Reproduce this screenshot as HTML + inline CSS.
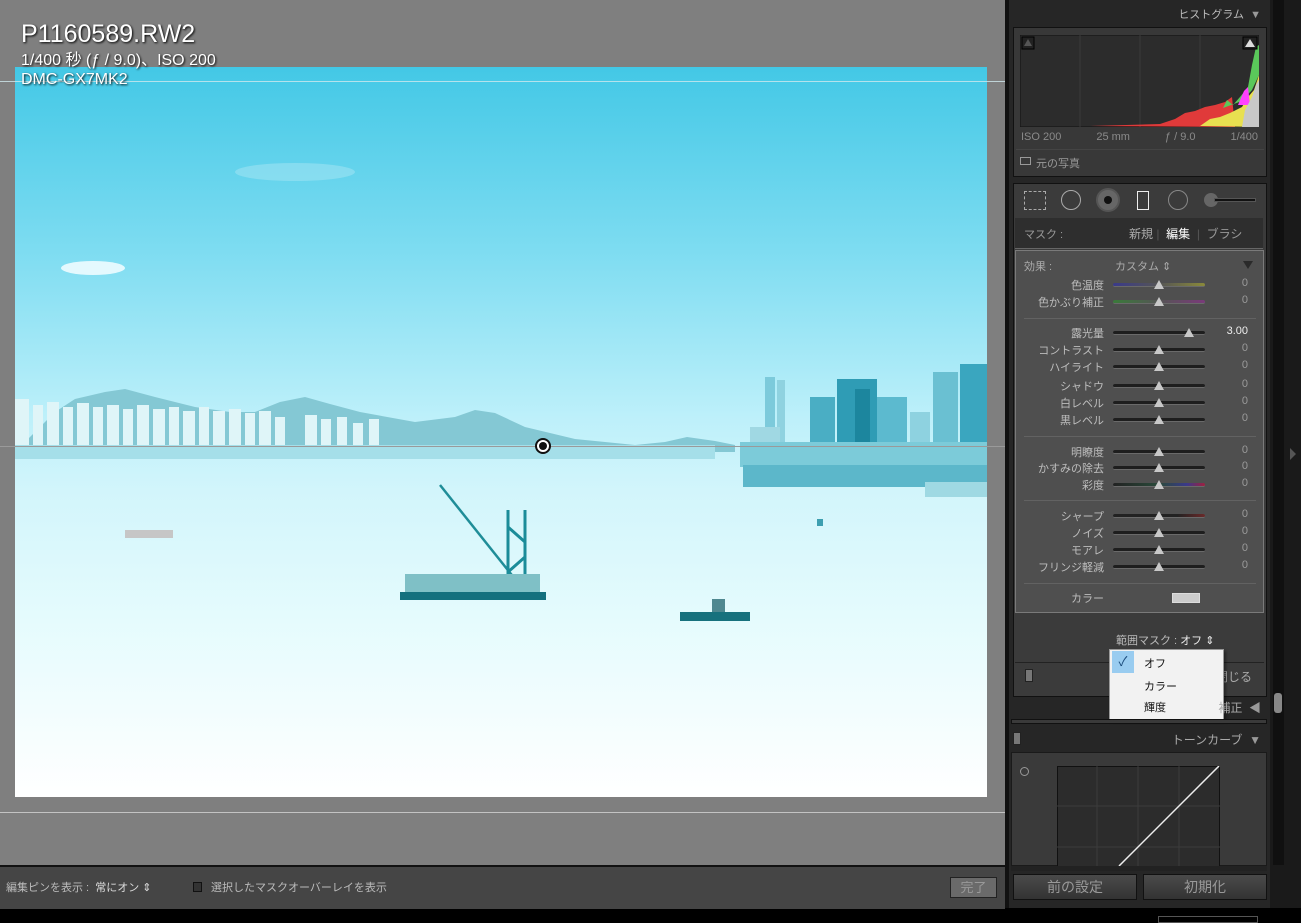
<!DOCTYPE html>
<html><head><meta charset="utf-8"><style>
*{margin:0;padding:0;box-sizing:border-box}
body{width:1301px;height:923px;overflow:hidden;background:#000;font-family:"Liberation Sans","Noto Sans CJK JP",sans-serif;position:relative}
.a{position:absolute}
.lbl{position:absolute;right:197px;font-size:11px;color:#bdbdbd;text-align:right;white-space:nowrap}
.trk{position:absolute;left:1113px;width:92px;height:4px;border-radius:2px;background:#1e1e1e;border-bottom:1px solid #6a6a6a}
.knob{position:absolute;width:0;height:0;border-left:5px solid transparent;border-right:5px solid transparent;border-bottom:9px solid #c8c8c8}
.val{position:absolute;left:1230px;width:18px;text-align:right;font-size:11px;color:#9a9a9a}
.sep{position:absolute;left:1024px;width:232px;height:1px;background:#626262}
.hdr{position:absolute;right:40px;font-size:12px;color:#aaa;white-space:nowrap}
</style></head><body>
<div class="a" style="left:0;top:0;width:1005px;height:865px;background:#7f7f7f"></div>
<svg class="a" style="left:15px;top:67px" width="972" height="730" viewBox="0 0 972 730">
<defs>
<linearGradient id="sky" x1="0" y1="0" x2="0" y2="1">
<stop offset="0" stop-color="#43c8e6"/><stop offset="0.25" stop-color="#7ddcf1"/><stop offset="0.48" stop-color="#bdf0fa"/><stop offset="0.58" stop-color="#d2f5fb"/><stop offset="0.75" stop-color="#e4fbfd"/><stop offset="1" stop-color="#ffffff"/>
</linearGradient>
</defs>
<rect width="972" height="730" fill="url(#sky)"/>
<ellipse cx="78" cy="201" rx="32" ry="7" fill="#eefcff" opacity=".9"/>
<ellipse cx="280" cy="105" rx="60" ry="9" fill="#a8e6f4" opacity=".5"/>
<path d="M40 345 L60 332 L90 325 L110 322 L140 330 L180 340 L215 345 L240 345 L265 335 L290 330 L315 337 L345 345 L400 355 L440 350 L460 343 L480 346 L510 360 L560 372 L620 378 L650 375 L672 370 L700 374 L720 378 L720 385 L0 385 Z" fill="#84c8d4"/>
<g fill="#dff5f8">
<rect x="0" y="332" width="14" height="50"/><rect x="18" y="338" width="10" height="45"/><rect x="32" y="335" width="12" height="48"/><rect x="48" y="340" width="10" height="42"/><rect x="62" y="336" width="12" height="46"/><rect x="78" y="340" width="10" height="42"/><rect x="92" y="338" width="12" height="44"/><rect x="108" y="342" width="10" height="40"/><rect x="122" y="338" width="12" height="44"/><rect x="138" y="342" width="12" height="40"/><rect x="154" y="340" width="10" height="42"/><rect x="168" y="344" width="12" height="38"/><rect x="184" y="340" width="10" height="42"/><rect x="198" y="344" width="12" height="38"/><rect x="214" y="342" width="12" height="40"/><rect x="230" y="346" width="10" height="36"/><rect x="244" y="344" width="12" height="38"/><rect x="260" y="350" width="10" height="32"/>
<rect x="290" y="348" width="12" height="34"/><rect x="306" y="352" width="10" height="30"/><rect x="322" y="350" width="10" height="32"/><rect x="338" y="356" width="10" height="26"/><rect x="354" y="352" width="10" height="30"/>
</g>
<rect x="0" y="378" width="700" height="14" fill="#a5dfe9"/>
<rect x="750" y="310" width="10" height="80" fill="#7ccadb"/><rect x="762" y="313" width="8" height="77" fill="#8fd2e0"/>
<rect x="735" y="360" width="30" height="30" fill="#a0d8e3"/>
<rect x="795" y="330" width="25" height="70" fill="#4aaec4"/>
<rect x="822" y="312" width="40" height="90" fill="#2f9cb5"/>
<rect x="840" y="322" width="15" height="78" fill="#1c869e"/>
<rect x="862" y="330" width="30" height="70" fill="#5cbacf"/>
<rect x="895" y="345" width="20" height="50" fill="#8ed2e0"/>
<rect x="918" y="305" width="25" height="90" fill="#6ac0d2"/>
<rect x="945" y="297" width="27" height="100" fill="#3aa6bf"/>
<rect x="725" y="375" width="247" height="25" fill="#7ccbd9"/>
<rect x="728" y="398" width="244" height="22" fill="#5cb7ca"/>
<rect x="910" y="415" width="62" height="15" fill="#9fd9e3"/>
<path d="M425 418 L500 512" stroke="#1f8d98" stroke-width="2.5"/>
<path d="M493 443 L493 533 M510 443 L510 533 M493 460 L510 475 M510 490 L493 505" stroke="#1b8c99" stroke-width="3" fill="none"/>
<rect x="390" y="507" width="135" height="22" fill="#7fc0c6"/>
<rect x="385" y="525" width="146" height="8" fill="#13707e"/>
<rect x="665" y="545" width="70" height="9" fill="#17717d"/>
<rect x="697" y="532" width="13" height="13" fill="#4f8890"/>
<rect x="110" y="463" width="48" height="8" fill="#c6c6c6"/>
<rect x="802" y="452" width="6" height="7" fill="#3d9fb0"/>
</svg>
<div class="a" style="left:0;top:81px;width:1005px;height:1px;background:#cfe8ee;opacity:.8"></div>
<div class="a" style="left:0;top:446px;width:1005px;height:1px;background:#9a9a9a"></div>
<div class="a" style="left:0;top:812px;width:1005px;height:1px;background:#e0e0e0;opacity:.7"></div>
<div class="a" style="left:535px;top:438px;width:16px;height:16px;border-radius:50%;background:#fff;border:2px solid #111"><div style="margin:2px;width:8px;height:8px;border-radius:50%;background:#111"></div></div>
<div class="a" style="left:21px;top:20px;color:#fff;font-size:25px;text-shadow:1px 1px 2px #000;line-height:28px">P1160589.RW2</div>
<div class="a" style="left:21px;top:51px;color:#fff;font-size:16px;text-shadow:1px 1px 2px #000;line-height:19px">1/400 秒 (ƒ / 9.0)、ISO 200<br>DMC-GX7MK2</div>
<div class="a" style="left:0;top:865px;width:1005px;height:44px;background:#454545;border-top:2px solid #111"></div>
<div class="a" style="left:6px;top:879px;font-size:11px;color:#bbb">編集ピンを表示 :&nbsp; <span style="color:#ddd">常にオン ⇕</span></div>
<div class="a" style="left:193px;top:882px;width:9px;height:10px;border:1px solid #111;background:#333"></div>
<div class="a" style="left:211px;top:879px;font-size:11px;color:#bbb">選択したマスクオーバーレイを表示</div>
<div class="a" style="left:950px;top:877px;width:47px;height:21px;background:#6a6a6a;border:1px solid #222;color:#999;font-size:13px;text-align:center;line-height:19px">完了</div>
<div class="a" style="left:0;top:910px;width:1005px;height:13px;background:#000"></div>
<div class="a" style="left:1005px;top:0;width:296px;height:923px;background:#262626"></div>
<div class="a" style="left:1005px;top:0;width:4px;height:923px;background:#111"></div>
<div class="a" style="left:1270px;top:0;width:31px;height:923px;background:#1a1a1a"></div>
<div class="a" style="left:1273px;top:0;width:11px;height:865px;background:#101010"></div>
<div class="a" style="left:1274px;top:693px;width:8px;height:20px;background:#888;border-radius:3px"></div>
<div class="a" style="left:1290px;top:448px;width:0;height:0;border-top:6px solid transparent;border-bottom:6px solid transparent;border-left:6px solid #555"></div>
<div class="hdr" style="top:6px;font-size:11px;color:#bbb">ヒストグラム &nbsp;<span style="color:#999">▼</span></div>
<div class="a" style="left:1013px;top:27px;width:254px;height:150px;background:#383838;border:1px solid #111"></div>
<svg class="a" style="left:1020px;top:35px" width="239" height="92">
<rect width="239" height="92" fill="#2c2c2c" stroke="#111"/>
<line x1="60" y1="0" x2="60" y2="92" stroke="#3a3a3a"/><line x1="120" y1="0" x2="120" y2="92" stroke="#3a3a3a"/><line x1="180" y1="0" x2="180" y2="92" stroke="#3a3a3a"/>
<path d="M70 91 L140 89 L155 84 L165 78 L175 76 L185 72 L195 70 L205 67 L212 62 L215 92 Z" fill="#e03a3a"/>
<path d="M180 91 L190 84 L200 82 L210 78 L222 72 L228 62 L234 55 L239 40 L239 92 Z" fill="#e8e050"/>
<path d="M203 73 L207 65 L213 70 L220 62 L228 52 L232 30 L236 12 L239 10 L239 40 L232 55 L222 66 Z" fill="#5ac85a"/>
<path d="M218 70 L224 56 L228 52 L230 70 Z" fill="#ff40ff"/>
<path d="M222 92 L225 75 L232 62 L236 50 L239 45 L239 92 Z" fill="#c8c8c8"/>
<rect x="2" y="2" width="12" height="12" fill="#222" stroke="#000"/><path d="M4 11 L8 4 L12 11Z" fill="#555"/>
<rect x="223" y="2" width="14" height="12" fill="#222" stroke="#000"/><path d="M225 12 L230 4 L235 12Z" fill="#ddd"/>
</svg>
<div class="a" style="left:1021px;top:131px;width:237px;font-size:11px;color:#8a8a8a;display:flex;justify-content:space-between"><span>ISO 200</span><span>25 mm</span><span>ƒ / 9.0</span><span>1/400</span></div>
<div class="a" style="left:1016px;top:149px;width:248px;height:1px;background:#444"></div>
<div class="a" style="left:1020px;top:157px;width:11px;height:8px;border:1px solid #999"></div>
<div class="a" style="left:1036px;top:155px;font-size:11px;color:#999">元の写真</div>
<div class="a" style="left:1013px;top:183px;width:254px;height:514px;background:#3b3b3b;border:1px solid #111"></div>
<div class="a" style="left:1024px;top:191px;width:22px;height:19px;border:1px dashed #aaa"></div>
<div class="a" style="left:1061px;top:190px;width:20px;height:20px;border-radius:50%;border:1px solid #aaa"></div>
<div class="a" style="left:1096px;top:188px;width:24px;height:24px;border-radius:50%;background:#666;border:2px solid #555"><div style="margin:6px;width:8px;height:8px;border-radius:50%;background:#111"></div></div>
<div class="a" style="left:1137px;top:191px;width:12px;height:19px;border:1px solid #eee"></div>
<div class="a" style="left:1168px;top:190px;width:20px;height:20px;border-radius:50%;border:1px solid #888"></div>
<div class="a" style="left:1204px;top:193px;width:14px;height:14px;border-radius:50%;background:#666"></div>
<div class="a" style="left:1214px;top:198px;width:42px;height:4px;background:#111;border:1px solid #555"></div>
<div class="a" style="left:1015px;top:218px;width:248px;height:31px;background:#2e2e2e;border-bottom:1px solid #666"></div>
<div class="a" style="left:1024px;top:226px;font-size:11px;color:#999">マスク :</div>
<div class="a" style="left:1129px;top:225px;font-size:12px;color:#aaa">新規 <span style="color:#555">|</span> <span style="color:#fff">&nbsp;編集</span> <span style="color:#555">&nbsp;|</span> <span style="color:#999">&nbsp;ブラシ</span></div>
<div class="a" style="left:1015px;top:250px;width:249px;height:363px;background:#4f4f4f;border:1px solid #7a7a7a"></div>
<div class="a" style="left:1024px;top:258px;font-size:11px;color:#aaa">効果 :</div>
<div class="a" style="left:1115px;top:258px;font-size:11px;color:#aaa">カスタム ⇕</div>
<div class="a" style="left:1243px;top:261px;width:0;height:0;border-left:5px solid transparent;border-right:5px solid transparent;border-top:8px solid #2a2a2a"></div>

<div class="lbl" style="top:277px">色温度</div><div class="trk" style="top:283px;background:linear-gradient(90deg,#3a3a8a,#555,#8a8a3a)"></div><div class="knob" style="left:1154px;top:280px"></div><div class="val" style="top:277px">0</div>
<div class="lbl" style="top:294px">色かぶり補正</div><div class="trk" style="top:300px;background:linear-gradient(90deg,#3a7a3a,#555,#7a3a7a)"></div><div class="knob" style="left:1154px;top:297px"></div><div class="val" style="top:294px">0</div>
<div class="sep" style="top:318px"></div>
<div class="lbl" style="top:325px">露光量</div><div class="trk" style="top:331px"></div><div class="knob" style="left:1184px;top:328px"></div><div class="val" style="top:325px;left:1220px;width:28px;color:#eee">3.00</div>
<div class="lbl" style="top:342px">コントラスト</div><div class="trk" style="top:348px"></div><div class="knob" style="left:1154px;top:345px"></div><div class="val" style="top:342px">0</div>
<div class="lbl" style="top:359px">ハイライト</div><div class="trk" style="top:365px"></div><div class="knob" style="left:1154px;top:362px"></div><div class="val" style="top:359px">0</div>
<div class="lbl" style="top:378px">シャドウ</div><div class="trk" style="top:384px"></div><div class="knob" style="left:1154px;top:381px"></div><div class="val" style="top:378px">0</div>
<div class="lbl" style="top:395px">白レベル</div><div class="trk" style="top:401px"></div><div class="knob" style="left:1154px;top:398px"></div><div class="val" style="top:395px">0</div>
<div class="lbl" style="top:412px">黒レベル</div><div class="trk" style="top:418px"></div><div class="knob" style="left:1154px;top:415px"></div><div class="val" style="top:412px">0</div>
<div class="sep" style="top:436px"></div>
<div class="lbl" style="top:444px">明瞭度</div><div class="trk" style="top:450px"></div><div class="knob" style="left:1154px;top:447px"></div><div class="val" style="top:444px">0</div>
<div class="lbl" style="top:460px">かすみの除去</div><div class="trk" style="top:466px"></div><div class="knob" style="left:1154px;top:463px"></div><div class="val" style="top:460px">0</div>
<div class="lbl" style="top:477px">彩度</div><div class="trk" style="top:483px;background:linear-gradient(90deg,#222,#2a4a3a 50%,#3a3a8a 80%,#a02040)"></div><div class="knob" style="left:1154px;top:480px"></div><div class="val" style="top:477px">0</div>
<div class="sep" style="top:500px"></div>
<div class="lbl" style="top:508px">シャープ</div><div class="trk" style="top:514px;background:linear-gradient(90deg,#222 70%,#6a2a2a)"></div><div class="knob" style="left:1154px;top:511px"></div><div class="val" style="top:508px">0</div>
<div class="lbl" style="top:525px">ノイズ</div><div class="trk" style="top:531px"></div><div class="knob" style="left:1154px;top:528px"></div><div class="val" style="top:525px">0</div>
<div class="lbl" style="top:542px">モアレ</div><div class="trk" style="top:548px"></div><div class="knob" style="left:1154px;top:545px"></div><div class="val" style="top:542px">0</div>
<div class="lbl" style="top:559px">フリンジ軽減</div><div class="trk" style="top:565px"></div><div class="knob" style="left:1154px;top:562px"></div><div class="val" style="top:559px">0</div>
<div class="sep" style="top:583px"></div>
<div class="lbl" style="top:590px">カラー</div>
<div class="a" style="left:1172px;top:593px;width:28px;height:10px;border:1px solid #ddd;background:#ccc"></div>
<div class="a" style="left:1116px;top:632px;font-size:11px;color:#bbb">範囲マスク : <span style="color:#eee">オフ ⇕</span></div>
<div class="a" style="left:1015px;top:662px;width:249px;height:1px;background:#222"></div>
<div class="a" style="left:1025px;top:669px;width:8px;height:13px;background:#777;border:1px solid #222"></div>
<div class="a" style="left:1216px;top:668px;font-size:12px;color:#aaa">閉じる</div>
<div class="a" style="left:1109px;top:649px;width:115px;height:71px;background:#f2f2f2;border:1px solid #999;box-shadow:2px 2px 3px rgba(0,0,0,.4)"></div>
<div class="a" style="left:1112px;top:651px;width:22px;height:22px;background:#99ccf0;color:#1a4a7a;font-size:13px;text-align:center;line-height:22px">✓</div>
<div class="a" style="left:1144px;top:655px;font-size:11px;color:#111">オフ</div>
<div class="a" style="left:1144px;top:678px;font-size:11px;color:#111">カラー</div>
<div class="a" style="left:1144px;top:699px;font-size:11px;color:#111">輝度</div>
<div class="hdr" style="top:699px">補正 &nbsp;<span style="color:#999">◀</span></div>
<div class="a" style="left:1011px;top:719px;width:256px;height:5px;border:1px solid #111;background:#3a3a3a"></div>
<div class="a" style="left:1013px;top:732px;width:8px;height:13px;background:#777;border:1px solid #222"></div>
<div class="hdr" style="top:731px">トーンカーブ &nbsp;<span style="color:#999">▼</span></div>
<div class="a" style="left:1011px;top:752px;width:256px;height:114px;background:#3a3a3a;border:1px solid #1a1a1a"></div>
<div class="a" style="left:1020px;top:767px;width:9px;height:9px;border-radius:50%;border:1px solid #999"></div>
<svg class="a" style="left:1057px;top:766px" width="163" height="100">
<rect x="0.5" y="0.5" width="162" height="110" fill="#2c2c2c" stroke="#111"/>
<path d="M40 0V100M81 0V100M122 0V100M0 40H163M0 81H163" stroke="#3c3c3c"/>
<line x1="62" y1="100" x2="162" y2="0" stroke="#eee" stroke-width="1.5"/>
</svg>
<div class="a" style="left:1011px;top:866px;width:256px;height:5px;background:#222"></div>
<div class="a" style="left:1013px;top:874px;width:124px;height:26px;background:linear-gradient(#4a4a4a,#333);border:1px solid #111;color:#999;font-size:14px;text-align:center;line-height:24px">前の設定</div>
<div class="a" style="left:1143px;top:874px;width:124px;height:26px;background:linear-gradient(#4a4a4a,#333);border:1px solid #111;color:#999;font-size:14px;text-align:center;line-height:24px">初期化</div>
<div class="a" style="left:1005px;top:908px;width:296px;height:15px;background:#000"></div>
<div class="a" style="left:1158px;top:916px;width:100px;height:7px;border:1px solid #555"></div>
</body></html>
